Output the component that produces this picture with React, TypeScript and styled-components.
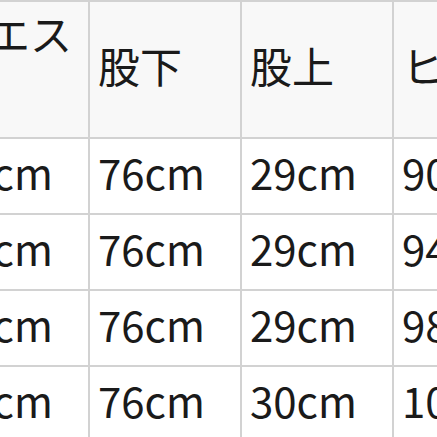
import React from "react";
import styled, { createGlobalStyle } from "styled-components";

const Global = createGlobalStyle`
  html, body { margin: 0; padding: 0; background: #ffffff; overflow: hidden; }
  body { font-family: "Noto Sans CJK JP", "Noto Sans", sans-serif; }
`;

const Grid = styled.div`
  display: grid;
  grid-template-columns: repeat(5, 150px);
  grid-template-rows: 135px repeat(4, 74px);
  gap: 2px;
  padding: 2px;
  background: #d2d2d2;
  margin-left: -64px;
  width: max-content;
`;

const Cell = styled.div<{ $head?: boolean }>`
  background: ${(p) => (p.$head ? "#f8f8f8" : "#ffffff")};
  color: #1a1a1a;
  font-size: 42px;
  font-weight: 400;
  line-height: 64px;
  padding: 0 8px 9px 8px;
  display: flex;
  align-items: center;
  overflow: hidden;
  word-break: break-all;
`;

const headers = ["ウエスト", "股下", "股上", "ヒップ", "わたり"];
const rows = [
  ["64cm", "76cm", "29cm", "90cm", "56cm"],
  ["68cm", "76cm", "29cm", "94cm", "58cm"],
  ["72cm", "76cm", "29cm", "98cm", "60cm"],
  ["76cm", "76cm", "30cm", "102cm", "62cm"],
];

export default function App() {
  return (
    <>
      <Global />
      <Grid>
        {headers.map((h) => (
          <Cell $head key={h}>
            {h}
          </Cell>
        ))}
        {rows.map((r, i) =>
          r.map((v, j) => <Cell key={`${i}-${j}`}>{v}</Cell>)
        )}
      </Grid>
    </>
  );
}
